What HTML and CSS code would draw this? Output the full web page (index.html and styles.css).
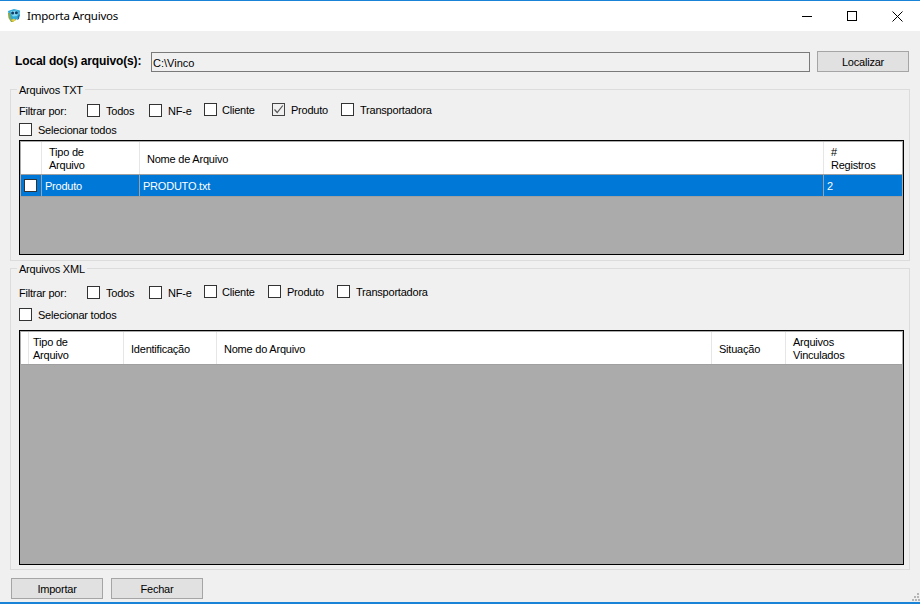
FILE: index.html
```html
<!DOCTYPE html>
<html lang="pt">
<head>
<meta charset="utf-8">
<title>Importa Arquivos</title>
<link rel="stylesheet" href="styles.css">
</head>
<body>
<div class="window">
  <header class="titlebar">
    <svg class="app-icon" width="14" height="15" viewBox="0 0 14 15">
      <path d="M1 3 L7 1 L13 2.5 L12.5 8 L9 12 L5 13 L2 9 Z" fill="#2fa9d8"/>
      <path d="M3.5 3 L10 2.5 L11.5 5 L10 8 L6 8.5 L4 6 Z" fill="#7fd6ee"/>
      <circle cx="5.6" cy="5" r="1.5" fill="#143a66"/>
      <circle cx="9.4" cy="4.8" r="1.5" fill="#143a66"/>
      <path d="M1 5 L3 5 L4 11 L7 14 L4 14 L1.5 10 Z" fill="#8aa84a"/>
      <path d="M4 12 L7 10.5 L9 12 L6 14 Z" fill="#e6c93c"/>
      <path d="M11 8 L13 6 L12 11 L10 12 Z" fill="#1d6fa8"/>
    </svg>
    <span class="title">Importa Arquivos</span>
    <div class="controls">
      <span class="control"><svg width="11" height="11" viewBox="0 0 11 11"><path d="M0 5.5H10" stroke="#000" fill="none"/></svg></span>
      <span class="control"><svg width="11" height="11" viewBox="0 0 11 11"><rect x="0.5" y="0.5" width="9" height="9" stroke="#000" fill="none"/></svg></span>
      <span class="control"><svg width="11" height="11" viewBox="0 0 11 11"><path d="M0.5 0.5L10.5 10.5M10.5 0.5L0.5 10.5" stroke="#000" fill="none"/></svg></span>
    </div>
  </header>

  <main class="content">
    <div class="local-row">
      <span class="local-label">Local do(s) arquivo(s):</span>
      <div class="path-input">C:\Vinco</div>
      <button class="btn btn-localizar">Localizar</button>
    </div>

    <section class="group group-txt">
      <span class="legend legend-txt">Arquivos TXT</span>
      <div class="filters">
        <span class="filter-label">Filtrar por:</span>
        <label class="check w-todos low"><span class="box"></span>Todos</label>
        <label class="check w-nfe low"><span class="box"></span>NF-e</label>
        <label class="check w-cliente tight"><span class="box"></span>Cliente</label>
        <label class="check w-produto"><span class="box checked"><svg width="11" height="11" viewBox="0 0 11 11"><path d="M1.5 5.5L4.2 8.5L9.8 1.5" stroke="#555" stroke-width="1.2" fill="none"/></svg></span>Produto</label>
        <label class="check"><span class="box"></span>Transportadora</label>
      </div>
      <label class="check select-all"><span class="box"></span>Selecionar todos</label>
      <div class="grid grid-txt">
        <div class="grid-row head cols-txt">
          <span class="cell"></span>
          <span class="cell">Tipo de<br>Arquivo</span>
          <span class="cell">Nome de Arquivo</span>
          <span class="cell">#<br>Registros</span>
        </div>
        <div class="grid-row data cols-txt">
          <span class="cell cell-check"><span class="box"></span></span>
          <span class="cell">Produto</span>
          <span class="cell">PRODUTO.txt</span>
          <span class="cell">2</span>
        </div>
      </div>
    </section>

    <section class="group group-xml">
      <span class="legend legend-xml">Arquivos XML</span>
      <div class="filters">
        <span class="filter-label">Filtrar por:</span>
        <label class="check w-todos low"><span class="box"></span>Todos</label>
        <label class="check w-nfe low"><span class="box"></span>NF-e</label>
        <label class="check w-cliente-x tight"><span class="box"></span>Cliente</label>
        <label class="check w-produto"><span class="box"></span>Produto</label>
        <label class="check"><span class="box"></span>Transportadora</label>
      </div>
      <label class="check select-all"><span class="box"></span>Selecionar todos</label>
      <div class="grid grid-xml">
        <div class="grid-row head cols-xml">
          <span class="cell"></span>
          <span class="cell">Tipo de<br>Arquivo</span>
          <span class="cell">Identificação</span>
          <span class="cell">Nome do Arquivo</span>
          <span class="cell">Situação</span>
          <span class="cell">Arquivos<br>Vinculados</span>
        </div>
      </div>
    </section>

    <footer class="actions">
      <button class="btn btn-action">Importar</button>
      <button class="btn btn-action">Fechar</button>
    </footer>
  </main>

  <svg class="grip" width="8" height="8" viewBox="0 0 8 8">
    <g fill="#b5b5b5">
      <rect x="5" y="0" width="2" height="2"/>
      <rect x="2" y="3" width="2" height="2"/><rect x="5" y="3" width="2" height="2"/>
      <rect x="0" y="6" width="2" height="2"/><rect x="3" y="6" width="2" height="2"/><rect x="6" y="6" width="2" height="2"/>
    </g>
  </svg>
</div>
</body>
</html>
```

FILE: styles.css
```css
* { box-sizing: border-box; }
html, body { margin: 0; padding: 0; }
body {
  width: 920px;
  height: 604px;
  overflow: hidden;
  background: #f0f0f0;
  color: #000;
  font-family: "Liberation Sans", Arial, sans-serif;
  font-size: 11px;
  line-height: 13px;
  letter-spacing: -0.22px;
}
.window {
  position: relative;
  width: 920px;
  height: 604px;
  display: flex;
  flex-direction: column;
  border-top: 1px solid #1883d7;
  border-bottom: 2px solid #1883d7;
}
.titlebar {
  height: 30px;
  flex: none;
  background: #fff;
  display: flex;
  align-items: center;
  padding-left: 7px;
}
.app-icon { flex: none; margin-right: 6px; margin-top: -2px; }
.title {
  font-family: "Noto Sans", "Open Sans", sans-serif;
  font-size: 11.5px;
  line-height: 16px;
  letter-spacing: -0.2px;
}
.controls { margin-left: auto; display: flex; }
.control {
  width: 45px;
  height: 30px;
  display: flex;
  align-items: center;
  justify-content: center;
}
.content {
  flex: 1;
  display: flex;
  flex-direction: column;
  padding: 20px 10px 0;
}
.local-row { display: flex; align-items: flex-start; height: 21px; }
.local-label {
  width: 136px;
  margin-left: 5px;
  font-weight: bold;
  font-size: 12px;
  line-height: 21px;
  letter-spacing: -0.13px;
}
.path-input {
  width: 659px;
  height: 20px;
  margin-top: 1px;
  border: 1px solid #7a7a7a;
  padding: 2px 1px;
  line-height: 16px;
  background: #f0f0f0;
  letter-spacing: 0;
}
.btn {
  font: inherit;
  letter-spacing: inherit;
  color: #000;
  background: #e1e1e1;
  border: 1px solid #a5a5a5;
  height: 21px;
  padding: 2px 0 0;
}
.btn-localizar { width: 92px; margin-left: 7px; }
.btn-action { width: 92px; }
.group { position: relative; border: 1px solid #dcdcdc; padding-left: 8px; }
.group-txt { height: 172px; margin-top: 17px; padding-top: 13px; }
.group-xml { height: 302px; margin-top: 7px; padding-top: 16px; }
.legend { position: absolute; left: 6px; top: -6px; padding: 0 2px; background: #f0f0f0; }
.filters { display: flex; align-items: flex-start; height: 20px; }
.group-xml .filters { height: 23px; }
.filter-label { width: 68px; line-height: 17px; }
.check { display: flex; align-items: flex-start; line-height: 14px; gap: 6px; white-space: nowrap; }
.check.tight { gap: 5px; }
.box {
  flex: none;
  width: 13px;
  height: 13px;
  border: 1px solid #333;
  background: #fff;
  display: flex;
  align-items: center;
  justify-content: center;
}
.box.checked { background: #f0f0f0; border-color: #444; }
.w-todos { width: 62px; }
.w-nfe { width: 55px; }
.w-cliente { width: 68px; }
.w-cliente-x { width: 64px; }
.w-produto { width: 69px; }
.low { padding-top: 1px; }
.select-all { height: 17px; }
.group-xml .select-all { height: 22px; }
.grid {
  width: 885px;
  border: 1px solid #000;
  padding: 1px;
  background: #ababab;
}
.grid-txt { height: 115px; }
.grid-xml { height: 235px; }
.grid-row { display: grid; }
.cols-txt { grid-template-columns: 21px 98px 684px 78px; }
.cols-xml { grid-template-columns: 5px 98px 93px 495px 74px 116px; }
.cell { display: flex; flex-direction: column; justify-content: center; }
.head { height: 33px; background: #fff; border-bottom: 1px solid #a0a0a0; }
.head .cell { padding: 2px 0 0 7px; border-right: 1px solid #e6e6e6; }
.head .cell:last-child { border-right: 0; }
.data {
  height: 22px;
  background: #0078d7;
  color: #fff;
  border-bottom: 1px solid #a0a0a0;
}
.data .cell { padding: 2px 0 0 3px; border-right: 1px solid #a0a0a0; }
.data .cell:last-child { border-right: 0; }
.data .cell-check { padding-top: 0; }
.actions { display: flex; gap: 8px; padding: 8px 0 0 1px; }
.grip { position: absolute; right: 0; bottom: 1px; }
```
